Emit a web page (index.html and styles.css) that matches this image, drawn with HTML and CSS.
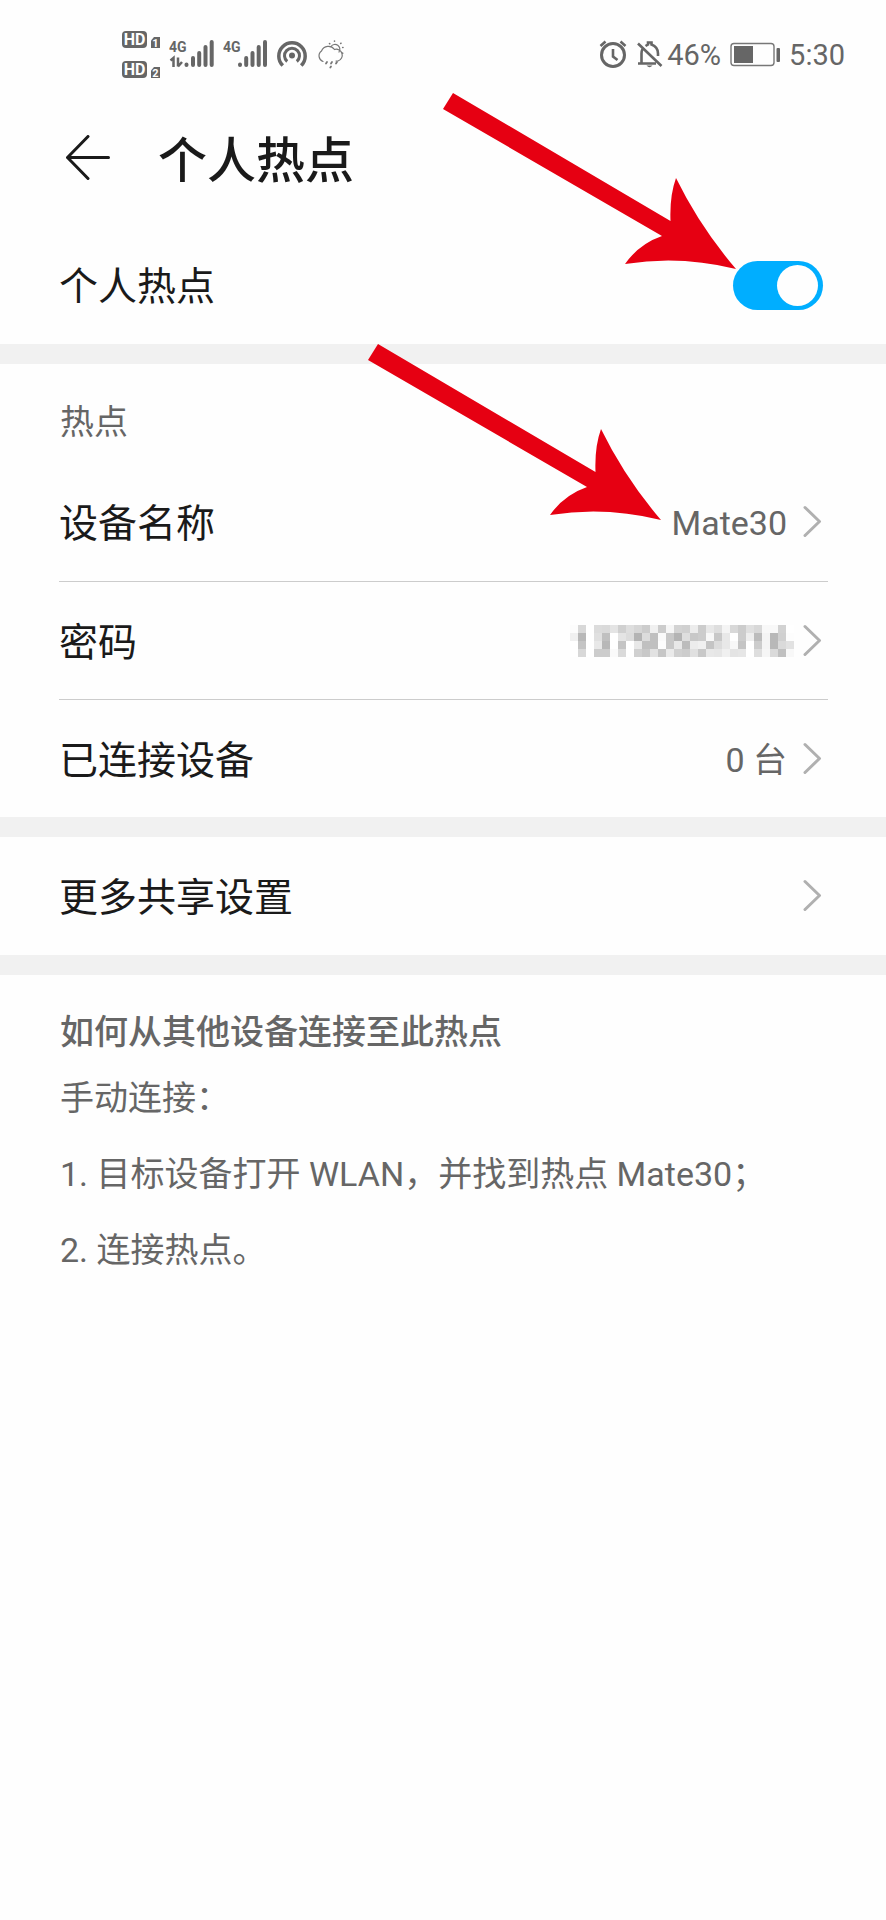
FILE: index.html
```html
<!DOCTYPE html>
<html lang="zh-CN">
<head>
<meta charset="utf-8">
<meta name="viewport" content="width=device-width, initial-scale=1">
<title>个人热点</title>
<link rel="stylesheet" href="styles.css">
</head>
<body>
<div class="status">
  <div class="status-left">
    <svg width="40" height="50" viewBox="121 30 40 50" aria-hidden="true">
      <g fill="#666">
        <rect x="122" y="31" width="25" height="17" rx="4"/>
        <path d="M151 40.500l3-3.500h6v11h-9z"/>
        <rect x="122" y="61" width="25" height="17" rx="4"/>
        <path d="M151 70.500l3-3.500h6v11h-9z"/>
      </g>
      <g class="badge-text" text-anchor="middle">
        <text x="134.500" y="45" class="hd">HD</text>
        <text x="155.500" y="46.500" class="sim">1</text>
        <text x="134.500" y="75" class="hd">HD</text>
        <text x="155.500" y="76.500" class="sim">2</text>
      </g>
    </svg>
    <svg width="46" height="50" viewBox="169 30 46 50" aria-hidden="true">
      <text x="169" y="52" class="net">4G</text>
      <path d="M170.500 60.500l3-2.500v9M178 57.500v9M178 66.500l4-4.500" fill="none" stroke="#666" stroke-width="2.500"/>
      <path d="M186.500 64.500v.5M193 58v7M199.200 53v12M205.500 47v18M211.700 42v23" stroke="#666" stroke-width="4" stroke-linecap="round"/>
    </svg>
    <svg width="45" height="50" viewBox="223 30 45 50" aria-hidden="true">
      <text x="223" y="52" class="net">4G</text>
      <path d="M240 64.500v.5M246.200 58v7M252.500 53v12M258.700 47v18M265 42v23" stroke="#666" stroke-width="4" stroke-linecap="round"/>
    </svg>
    <svg width="32" height="50" viewBox="276 30 32 50" fill="none" stroke="#666" stroke-width="3.500" aria-hidden="true">
      <path d="M282.800 65.500A13.200 13.200 0 1 1 301.200 65.500"/>
      <path d="M287.200 61.500A7.500 7.500 0 1 1 296.800 61.500" stroke-width="3"/>
      <circle cx="292" cy="55.500" r="3" fill="#666" stroke="none"/>
    </svg>
    <svg width="30" height="50" viewBox="316 30 30 50" fill="none" stroke="#777" stroke-width="1.200" stroke-linecap="round" aria-hidden="true">
      <path d="M323 61.500a6 6 0 0 1-1.500-10.500a7.500 7.500 0 0 1 13-1.500a5.500 5.500 0 0 1 3.500 11.500h-2"/>
      <path d="M331 46.500a4.700 4.700 0 1 1 8 5.500"/>
      <path d="M329.500 43.500l.3.300M334.500 41v.3M341 43.200l-.3.300M342.700 47.500h.3M342.500 53l.2.200" stroke-width="1.600"/>
      <path d="M327 62l-1 1.500M332 62l-1 1.500M337 62l-1 1.500M331 66.500l-.7 1" stroke-width="1.800"/>
    </svg>
  </div>
  <div class="status-right">
    <div class="status-group">
      <svg width="34" height="50" viewBox="597 30 34 50" fill="none" stroke="#666" stroke-width="3" aria-hidden="true">
        <circle cx="612" cy="55" r="11.500"/>
        <path d="M612 49v7.500l4.500 3.500M599.500 46l5-4.500M619.500 41.500l5 4.500" stroke-width="2.600"/>
      </svg>
      <svg width="27" height="50" viewBox="635 30 27 50" fill="none" stroke="#666" stroke-width="2.600" aria-hidden="true">
        <path d="M637 43.500l23.500 22.500M637 63.500h18M640.500 63v-9.500q0-2.500 1-4.500M644.500 46l2.500-1.500v-2h3.500v2q6.500 2.500 6.500 9v2.500"/>
        <path d="M645.500 65.500h6q-3 3.500-6 0z" fill="#666" stroke="none"/>
      </svg>
      <span>46%</span>
    </div>
    <svg width="50" height="50" viewBox="729 30 50 50" aria-hidden="true">
      <rect x="730" y="43.500" width="43" height="22" rx="3" fill="none" stroke="#777" stroke-width="1.400"/>
      <rect x="733" y="46" width="19" height="17" fill="#666"/>
      <rect x="775.500" y="48" width="3.500" height="14" rx="1" fill="#666"/>
    </svg>
    <span>5:30</span>
  </div>
</div>

<header class="header">
  <button class="back" type="button" aria-label="返回">
    <svg width="56" height="50" viewBox="60 135 56 50" fill="none" stroke="#1a1a1a" stroke-width="3" stroke-linecap="round" stroke-linejoin="round" aria-hidden="true">
      <path d="M108.500 157.500H67.500M88 136.500L67.500 157.500L88 178.500"/>
    </svg>
  </button>
  <h1 class="title">个人热点</h1>
</header>

<main>
  <section class="block">
    <div class="row">
      <label class="name" for="hotspot">个人热点</label>
      <input class="toggle" id="hotspot" type="checkbox" role="switch" checked>
      <svg class="pointer pointer-toggle" width="293" height="177" viewBox="443 93 293 177" aria-hidden="true">
        <path class="pointer-shape" d="M453 93L670.500 221Q669.500 196 676 178Q700 227 736 269Q680 255 625 264Q639 244 662 236L443 109Z"/>
      </svg>
    </div>
  </section>

  <section class="block">
    <h2 class="caption">热点</h2>
    <a class="row" href="#name">
      <span class="name">设备名称</span>
      <span class="value">Mate30</span>
      <svg class="chevron" width="20" height="34" viewBox="0 0 20 34" aria-hidden="true"><path d="M2 2.500L16.500 16.500L2 30.500"/></svg>
      <svg class="pointer pointer-name" width="293" height="177" viewBox="443 93 293 177" aria-hidden="true">
        <path class="pointer-shape" d="M453 93L670.500 221Q669.500 196 676 178Q700 227 736 269Q680 255 625 264Q639 244 662 236L443 109Z"/>
      </svg>
    </a>
    <a class="row" href="#password">
      <span class="name">密码</span>
      <svg class="mosaic" id="mosaic" width="224" height="32" viewBox="0 0 28 4" shape-rendering="crispEdges" role="img" aria-label="已隐藏"></svg>
      <svg class="chevron" width="20" height="34" viewBox="0 0 20 34" aria-hidden="true"><path d="M2 2.500L16.500 16.500L2 30.500"/></svg>
    </a>
    <a class="row" href="#devices">
      <span class="name">已连接设备</span>
      <span class="value">0 台</span>
      <svg class="chevron" width="20" height="34" viewBox="0 0 20 34" aria-hidden="true"><path d="M2 2.500L16.500 16.500L2 30.500"/></svg>
    </a>
  </section>

  <section class="block">
    <a class="row" href="#more">
      <span class="name">更多共享设置</span>
      <svg class="chevron" width="20" height="34" viewBox="0 0 20 34" aria-hidden="true"><path d="M2 2.500L16.500 16.500L2 30.500"/></svg>
    </a>
  </section>

  <section class="help">
    <h2 class="help-title">如何从其他设备连接至此热点</h2>
    <p class="help-line">手动连接：</p>
    <p class="help-line">1. 目标设备打开 WLAN，并找到热点 Mate30；</p>
    <p class="help-line">2. 连接热点。</p>
  </section>
</main>
<script src="mosaic.js"></script>
</body>
</html>
```
FILE: styles.css
```css
* {
  box-sizing: border-box;
}

body {
  margin: 0;
  background: #fefefe;
  color: #1a1a1a;
  font-family: Roboto, "Noto Sans CJK SC", sans-serif;
}

h1, h2, p {
  margin: 0;
}

svg {
  display: block;
  flex: none;
}

.status {
  display: flex;
  justify-content: space-between;
  align-items: center;
  height: 110px;
  padding: 0 41px 0 121px;
  color: #666;
  font-size: 29px;
}

.status-left,
.status-right {
  display: flex;
  align-items: center;
  gap: 8px;
}

.status-right {
  gap: 9px;
}

.status-group {
  display: flex;
  align-items: center;
  gap: 4px;
}

.badge-text {
  fill: #fefefe;
  font-weight: 700;
}

.hd {
  font-size: 16px;
}

.sim {
  font-size: 11px;
}

.net {
  fill: #666;
  font-size: 14px;
  font-weight: 700;
}

.header {
  display: flex;
  align-items: center;
  gap: 42px;
  height: 100px;
  padding: 0 60px;
  margin-bottom: 16px;
}

.back {
  padding: 0;
  border: 0;
  background: none;
}

.title {
  padding-top: 4px;
  font-size: 49px;
  font-weight: 500;
  line-height: 60px;
}

.block {
  border-bottom: 20px solid #f1f1f1;
}

.caption {
  padding: 28px 60px 11px;
  color: #666;
  font-size: 34px;
  font-weight: 400;
  line-height: 60px;
}

.row {
  position: relative;
  display: flex;
  align-items: center;
  height: 118px;
  margin: 0 58px 0 59px;
  color: inherit;
  text-decoration: none;
}

.row + .row {
  border-top: 1px solid #ccc;
}

.name {
  flex: 1;
  padding-top: 4px;
  font-size: 39px;
  line-height: 60px;
}

.value {
  padding-top: 2px;
  color: #666;
  font-size: 34px;
  line-height: 60px;
}

.chevron {
  margin: 0 5px 0 16px;
  fill: none;
  stroke: #b0b0b0;
  stroke-width: 3;
  stroke-linecap: round;
  stroke-linejoin: round;
}

.mosaic {
  margin-right: -7px;
}

.toggle {
  appearance: none;
  display: flex;
  align-items: center;
  justify-content: flex-end;
  width: 90px;
  height: 49px;
  margin: 0 5px 0 0;
  padding: 0 5px;
  border-radius: 25px;
  background: #00aeff;
}

.toggle::before {
  content: "";
  width: 41px;
  height: 41px;
  border-radius: 50%;
  background: #fefefe;
}

.toggle:not(:checked) {
  justify-content: flex-start;
  background: #ccc;
}

.pointer {
  position: absolute;
  z-index: 1;
  pointer-events: none;
}

.pointer-toggle {
  right: 92px;
  bottom: 74px;
}

.pointer-name {
  right: 167px;
  bottom: 60px;
}

.pointer-shape {
  fill: #e60012;
}

.help {
  padding: 29px 60px;
  color: #666;
}

.help-title {
  font-size: 34px;
  font-weight: 500;
  line-height: 56px;
}

.help-line {
  font-size: 34px;
  line-height: 76px;
}
```
FILE: mosaic.js
```js
// Grey level of each cell, two hex digits per cell, one string per row.
const rows = [
  "fcd8ffdcdae4d0ded6ccf0ccf6d3d0eccce8def4d8cce0d8f8f8d2ff",
  "f0b8ffe0c0ffe4dcb4dcc0fac8b4dec8ccf8c8e8ffcceebcf4b8d0fd",
  "ffc4ffe8b8ffc4ffe8c0c0fdc8e8bcecf0c4dce8f8c4ffccf4b8dae2",
  "ffd8ffccccfadaffd0c8e2c6ead0cce0c8e8e6f0e4e6ffdef6dac0f8"
];
const mosaic = document.getElementById("mosaic");
rows.forEach((row, y) => {
  row.match(/../g).forEach((level, x) => {
    const cell = document.createElementNS("http://www.w3.org/2000/svg", "rect");
    cell.setAttribute("x", x);
    cell.setAttribute("y", y);
    cell.setAttribute("width", 1);
    cell.setAttribute("height", 1);
    cell.setAttribute("fill", "#" + level.repeat(3));
    mosaic.appendChild(cell);
  });
});
```
